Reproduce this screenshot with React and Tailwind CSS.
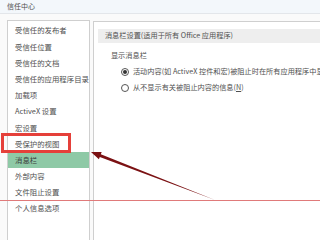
import React from 'react';

const items = [
  '受信任的发布者',
  '受信任位置',
  '受信任的文档',
  '受信任的应用程序目录',
  '加载项',
  'ActiveX 设置',
  '宏设置',
  '受保护的视图',
  '消息栏',
  '外部内容',
  '文件阻止设置',
  '个人信息选项',
];

const Radio = ({ checked }) => (
  <span className="w-[8px] h-[8px] rounded-full border border-[#555] bg-white flex items-center justify-center shrink-0">
    {checked && <span className="w-[4px] h-[4px] rounded-full bg-[#333]" />}
  </span>
);

const App = () => {
  return (
    <div
      className="relative w-[320px] h-[240px] overflow-hidden bg-white text-[#505050] flex flex-col"
      style={{ fontFamily: '"Noto Sans CJK SC", "Noto Sans", sans-serif' }}
    >
      {/* title bar */}
      <div className="h-[14px] bg-[#f3f7fb] border-b border-[#e3e6ea] flex items-center pl-[7px] text-[7px] leading-none">
        信任中心
      </div>

      <div className="flex flex-1 pl-[7px] pt-[6px] bg-[#fafafa]">
        {/* left nav */}
        <div className="w-[85px] border border-b-0 border-[#cfcfcf] bg-white pt-[1px]">
          {items.map((it) => (
            <div
              key={it}
              className={`h-[16.2px] flex items-center pl-[7px] text-[7.4px] leading-none whitespace-nowrap ${
                it === '消息栏' ? 'bg-[#8ec9a6] text-[#3a3a3a]' : ''
              }`}
            >
              {it}
            </div>
          ))}
        </div>

        {/* right panel */}
        <div className="flex-1 ml-[3px] mt-[1px] border-l border-t border-[#cfcfcf] bg-white pt-[7px]">
          <div className="h-[14px] mx-[4px] bg-[#eeeeee] flex items-center pl-[7px] text-[7.2px] leading-none whitespace-nowrap">
            消息栏设置(适用于所有 Office 应用程序)
          </div>
          <div className="pl-[17px] mt-[9px] text-[7.2px] leading-none whitespace-nowrap">显示消息栏</div>
          <div className="pl-[27px] mt-[8px] flex items-center gap-[4px] h-[9px] text-[7.2px] leading-none whitespace-nowrap">
            <Radio checked />
            <span>活动内容(如 ActiveX 控件和宏)被阻止时在所有应用程序中显示消息栏</span>
          </div>
          <div className="pl-[27px] mt-[7px] flex items-center gap-[4px] h-[9px] text-[7.2px] leading-none whitespace-nowrap">
            <Radio />
            <span>
              从不显示有关被阻止内容的信息(<span className="underline">N</span>)
            </span>
          </div>
        </div>
      </div>

      {/* annotations */}
      <div className="absolute left-0 top-[200px] w-full h-[1px] bg-[#e07a7a]" />
      <div className="absolute left-[1px] top-[133px] w-[70px] h-[20px] border-[3px] border-[#e5403a]" />
      <svg className="absolute left-0 top-0" width="320" height="240">
        <polygon
          points="91,152 101.7,151.9 100.8,154.2 215,200 99.8,157 98.9,159.3"
          fill="#7b1113"
        />
      </svg>
    </div>
  );
};

export default App;
